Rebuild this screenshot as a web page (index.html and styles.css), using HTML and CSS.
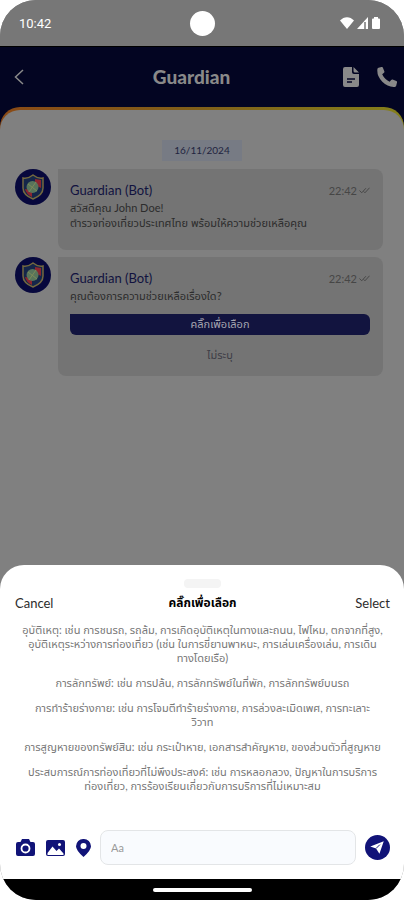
FILE: index.html
```html
<!DOCTYPE html>
<html lang="th">
<head>
  <meta charset="UTF-8">
  <meta name="viewport" content="width=device-width, initial-scale=1">
  <title>Guardian</title>
  <link rel="stylesheet" href="styles.css">
</head>
<body>
  <div class="phone">
    <div class="status-bar">
      <span class="clock">10:42</span>
      <span class="camera-hole"></span>
      <span class="status-icons">
        <svg width="14" height="12" viewBox="0 0 14 12"><path fill="#fff" d="M0 3.500C4-1 10-1 14 3.500L7 12z"/></svg>
        <svg width="12" height="12" viewBox="0 0 12 12"><path fill="#fff" d="M11 0v12H0z"/><path stroke="#777" stroke-width="1.500" d="M8 5v7"/></svg>
        <svg width="8" height="12" viewBox="0 0 8 12"><path fill="#fff" d="M2 1.500V0h4v1.500h1q1 0 1 1V11q0 1-1 1H1q-1 0-1-1V2.500q0-1 1-1z"/></svg>
      </span>
    </div>

    <header class="header">
      <button class="icon-button back" aria-label="Back">
        <svg width="10" height="16" viewBox="0 0 10 16"><path fill="none" stroke="#898989" stroke-width="1.500" d="M9 1L1.500 8L9 15"/></svg>
      </button>
      <h1>Guardian</h1>
      <div class="header-actions">
        <button class="icon-button" aria-label="Document">
          <svg width="16" height="20" viewBox="0 0 16 20"><path fill="#898989" d="M2 0h7v5q0 2 2 2h5v11q0 2-2 2H2q-2 0-2-2V2q0-2 2-2zM10.500 0L16 5.500h-4q-1.500 0-1.500-1.500z"/><path stroke="#050624" stroke-width="1.500" d="M4 12h8M4 15h5"/></svg>
        </button>
        <button class="icon-button" aria-label="Call">
          <svg width="20" height="20" viewBox="0 0 20 20"><path fill="#898989" d="M1.500.8L4.500 0q1-.2 1.400.7l1.500 3.700q.3.800-.4 1.400L5.200 7.300q2.200 4.800 7.400 7.500l1.600-1.900q.6-.7 1.400-.4l3.700 1.600q.9.400.7 1.400l-.8 3.300q-.3 1-1.300 1.200Q11 20.300 5.300 14.700T.4 2.100Q.5 1.100 1.500.8z"/></svg>
        </button>
      </div>
    </header>

    <main class="chat-edge">
      <div class="chat">
        <time class="date">16/11/2024</time>

        <div class="message">
          <svg class="avatar" viewBox="0 0 36 36"><circle cx="18" cy="18" r="18" fill="#07083d"/><path fill="#15264a" stroke="#73683f" stroke-width="1.500" d="M8 9q5 1 10-3q5 4 10 3v10q0 7-10 11Q8 26 8 19z"/><path fill="#8c2530" d="M20 10l6 1v8l-6-3zM10 20l7 1v7q-6-3-7-8z"/><circle cx="17.500" cy="18" r="6" fill="#58745b"/><path stroke="#7d8a58" d="M13 15l9 7M21 13l-7 10" fill="none"/></svg>
          <div class="bubble">
            <div class="bubble-head">
              <h2>Guardian (Bot)</h2>
              <span class="sent">22:42 <svg width="11" height="7" viewBox="0 0 12 7"><path fill="none" stroke="#444" d="M.5 3.500L3 6L7.500 1M5 4.500L6.500 6L11.500.5"/></svg></span>
            </div>
            <p>สวัสดีคุณ John Doe!<br>ตำรวจท่องเที่ยวประเทศไทย พร้อมให้ความช่วยเหลือคุณ</p>
          </div>
        </div>

        <div class="message">
          <svg class="avatar" viewBox="0 0 36 36"><circle cx="18" cy="18" r="18" fill="#07083d"/><path fill="#15264a" stroke="#73683f" stroke-width="1.500" d="M8 9q5 1 10-3q5 4 10 3v10q0 7-10 11Q8 26 8 19z"/><path fill="#8c2530" d="M20 10l6 1v8l-6-3zM10 20l7 1v7q-6-3-7-8z"/><circle cx="17.500" cy="18" r="6" fill="#58745b"/><path stroke="#7d8a58" d="M13 15l9 7M21 13l-7 10" fill="none"/></svg>
          <div class="bubble">
            <div class="bubble-head">
              <h2>Guardian (Bot)</h2>
              <span class="sent">22:42 <svg width="11" height="7" viewBox="0 0 12 7"><path fill="none" stroke="#444" d="M.5 3.500L3 6L7.500 1M5 4.500L6.500 6L11.500.5"/></svg></span>
            </div>
            <p>คุณต้องการความช่วยเหลือเรื่องใด?</p>
            <button class="choose">คลิ๊กเพื่อเลือก</button>
            <button class="unspecified">ไม่ระบุ</button>
          </div>
        </div>
      </div>
    </main>

    <section class="sheet">
      <span class="handle"></span>
      <div class="sheet-head">
        <button class="sheet-action">Cancel</button>
        <h2>คลิ๊กเพื่อเลือก</h2>
        <button class="sheet-action select">Select</button>
      </div>
      <ul class="options">
        <li>อุบัติเหตุ: เช่น การชนรถ, รถล้ม, การเกิดอุบัติเหตุในทางและถนน, ไฟไหม, ตกจากที่สูง,<br>อุบัติเหตุระหว่างการท่องเที่ยว (เช่น ในการขี่ยานพาหนะ, การเล่นเครื่องเล่น, การเดิน<br>ทางโดยเรือ)</li>
        <li>การลักทรัพย์: เช่น การปล้น, การลักทรัพย์ในที่พัก, การลักทรัพย์บนรถ</li>
        <li>การทำร้ายร่างกาย: เช่น การโจมตีทำร้ายร่างกาย, การล่วงละเมิดเพศ, การทะเลาะ<br>วิวาท</li>
        <li>การสูญหายของทรัพย์สิน: เช่น กระเป๋าหาย, เอกสารสำคัญหาย, ของส่วนตัวที่สูญหาย</li>
        <li>ประสบการณ์การท่องเที่ยวที่ไม่พึงประสงค์: เช่น การหลอกลวง, ปัญหาในการบริการ<br>ท่องเที่ยว, การร้องเรียนเกี่ยวกับการบริการที่ไม่เหมาะสม</li>
      </ul>
      <form class="composer">
        <div class="attachments">
          <button type="button" class="icon-button" aria-label="Camera">
            <svg width="19" height="17" viewBox="0 0 19 17"><path fill="#111378" d="M6 0h7l1.500 3H17q2 0 2 2v10q0 2-2 2H2q-2 0-2-2V5q0-2 2-2h2.500z"/><circle cx="9.500" cy="9.500" r="4" fill="none" stroke="#fff" stroke-width="1.800"/></svg>
          </button>
          <button type="button" class="icon-button" aria-label="Picture">
            <svg width="19" height="16" viewBox="0 0 19 16"><rect width="19" height="16" rx="2" fill="#111378"/><path fill="#fff" d="M1.500 13l5-6.500l4 4.500l2.500-2.500l4.500 5V15h-16z"/><circle cx="13.500" cy="4.500" r="1.500" fill="#fff"/></svg>
          </button>
          <button type="button" class="icon-button" aria-label="Location">
            <svg width="15" height="18" viewBox="0 0 15 18"><path fill="#111378" d="M7.500 0A7.300 7.300 0 0 1 15 7.300Q15 11.500 7.500 18Q0 11.500 0 7.300A7.300 7.300 0 0 1 7.500 0z"/><circle cx="7.500" cy="7" r="3" fill="#fff"/></svg>
          </button>
        </div>
        <input type="text" placeholder="Aa" aria-label="Message">
        <button type="button" class="icon-button" aria-label="Send">
          <svg width="25" height="25" viewBox="0 0 26 26"><circle cx="13" cy="13" r="13" fill="#111378"/><path fill="#fff" d="M19.500 6.500L15 19.500l-3.500-5.500l-6-2z"/><path stroke="#111378" stroke-width="1" d="M11.500 14l4-4"/></svg>
        </button>
      </form>
    </section>
    <div class="home-bar"><span></span></div>
  </div>
</body>
</html>
```
FILE: styles.css
```css
* {
  box-sizing: border-box;
}

body {
  margin: 0;
  background-color: #fff;
  font-family: Lato, "Noto Sans Thai", "Noto Sans", sans-serif;
  font-size: 11px;
  color: #2c2c2c;
}

h1, h2, p, ul {
  margin: 0;
  padding: 0;
}

button {
  border: 0;
  padding: 0;
  background: none;
  font: inherit;
  color: inherit;
}

svg {
  display: block;
}

.phone {
  display: flex;
  flex-direction: column;
  min-height: 100vh;
  border-radius: 36px;
  overflow: hidden;
  background-color: #808080;
}

/* status bar */
.status-bar {
  display: grid;
  grid-template-columns: 1fr auto 1fr;
  align-items: center;
  height: 46px;
  padding: 0 19px;
  background-color: #777;
}

.clock {
  font-family: Roboto, sans-serif;
  font-size: 13px;
  font-weight: 400;
  color: #fff;
}

.camera-hole {
  width: 25px;
  height: 25px;
  border-radius: 50%;
  background-color: #fff;
}

.status-icons {
  display: flex;
  justify-content: flex-end;
  gap: 3px;
  padding-right: 5px;
}

/* header */
.header {
  display: grid;
  grid-template-columns: 1fr auto 1fr;
  align-items: center;
  height: 61px;
  padding: 0 7px 0 14px;
  border-top: 1px solid #000;
  background-color: #030522;
}

.header h1 {
  padding-right: 28px;
  font-size: 19px;
  line-height: 24px;
  font-weight: 900;
  color: #898989;
}

.header-actions {
  display: flex;
  justify-content: flex-end;
  gap: 18px;
}

.icon-button {
  flex: none;
}

.back {
  justify-self: start;
}

/* chat */
.chat-edge {
  flex: 1;
  display: flex;
  margin-bottom: -24px;
  padding-top: 3px;
  background: linear-gradient(to right, #8a4a16, #80601a 50%, #85801c) top / 100% 24px no-repeat #030522;
  border-radius: 20px 20px 0 0;
  box-shadow: 0 -20px 0 20px #030522;
  clip-path: inset(0);
}

.chat {
  flex: 1;
  padding: 30px 15px 24px;
  border-radius: 20px 20px 0 0;
  background-color: #808080;
}

.date {
  display: block;
  width: 80px;
  margin: 0 auto 8px;
  background-color: #777b84;
  font-size: 10px;
  line-height: 21px;
  text-align: center;
  color: #22243f;
}

.message {
  display: flex;
  gap: 7px;
  margin: 0 6px 7px 0;
}

.avatar {
  flex: none;
  width: 36px;
  height: 36px;
}

.bubble {
  flex: 1;
  min-height: 81px;
  padding: 11px 13px 10px 12px;
  border-radius: 0 8px 8px 8px;
  background-color: #747474;
}

.bubble-head {
  display: flex;
  justify-content: space-between;
  align-items: center;
}

.bubble-head h2 {
  font-size: 13px;
  line-height: 20px;
  font-weight: 400;
  color: #11123f;
}

.sent {
  display: flex;
  align-items: center;
  gap: 2px;
  color: #464646;
}

.bubble p {
  line-height: 15px;
}

.choose {
  display: block;
  width: 100%;
  height: 21px;
  margin-top: 11px;
  border-radius: 0 6px 6px 6px;
  background-color: #12143f;
  color: #a5a5b0;
}

.unspecified {
  display: block;
  width: 100%;
  height: 21px;
  margin-top: 10px;
  color: #3d3d46;
}

/* bottom sheet */
.sheet {
  position: relative;
  padding: 14px 14px 14px 15px;
  border-radius: 24px 24px 0 0;
  background-color: #fff;
}

.handle {
  display: block;
  width: 37px;
  height: 9px;
  margin: 0 auto;
  border-radius: 4px;
  background-color: #f4f4f4;
}

.sheet-head {
  display: grid;
  grid-template-columns: 1fr auto 1fr;
  align-items: center;
  height: 30px;
}

.sheet-head h2 {
  font-size: 12px;
  font-weight: 700;
  color: #000;
}

.sheet-action {
  justify-self: start;
  font-size: 13px;
}

.select {
  justify-self: end;
}

.options {
  display: grid;
  gap: 11px;
  margin-top: 5px;
  list-style: none;
  line-height: 14px;
  text-align: center;
  white-space: nowrap;
  color: #777;
}

.options li {
  justify-self: center;
}

.composer {
  display: flex;
  align-items: center;
  gap: 9px;
  margin-top: 37px;
  padding-left: 1px;
}

.attachments {
  display: flex;
  align-items: center;
  gap: 11px;
}

.composer input {
  flex: 1;
  min-width: 0;
  height: 35px;
  padding: 0 10px;
  border: 1px solid #e3e5e7;
  border-radius: 8px;
  background-color: #f9fbfe;
  font: inherit;
}

.composer input::placeholder {
  color: #999;
}

/* home indicator */
.home-bar {
  display: flex;
  align-items: center;
  justify-content: center;
  height: 21px;
  background-color: #000;
}

.home-bar span {
  width: 99px;
  height: 4px;
  border-radius: 2px;
  background-color: #fff;
}
```
